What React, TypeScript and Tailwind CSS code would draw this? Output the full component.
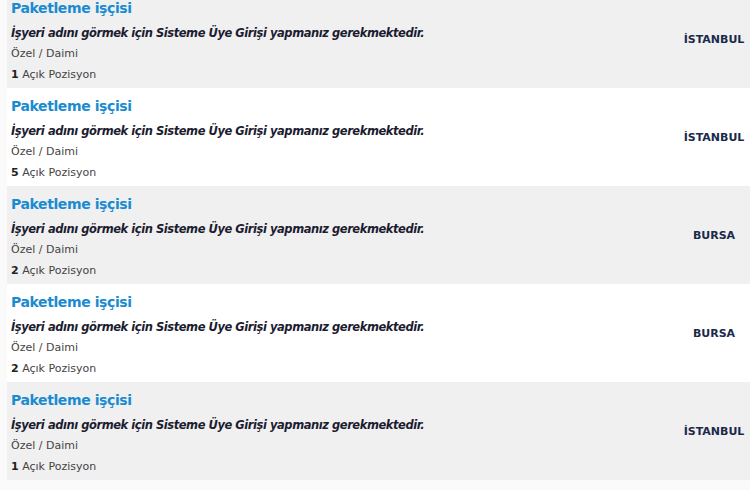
import React from "react";

type Job = { count: number; city: string };

const jobs: Job[] = [
  { count: 1, city: "İSTANBUL" },
  { count: 5, city: "İSTANBUL" },
  { count: 2, city: "BURSA" },
  { count: 2, city: "BURSA" },
  { count: 1, city: "İSTANBUL" },
];

function JobRow({ job, shaded }: { job: Job; shaded: boolean }) {
  return (
    <div className={`flex h-[98px] items-center ${shaded ? "bg-[#f0f0f0]" : "bg-white"}`}>
      <div className="flex-1 self-stretch pl-[4px] pt-[7px]">
        <div className="text-[14px] font-bold leading-[22px] tracking-[-0.4px] text-[#1b8bd0]">
          Paketleme işçisi
        </div>
        <div className="mt-[4px] text-[11.5px] font-bold italic leading-[20px] tracking-[-0.45px] text-[#1c1c30]">
          İşyeri adını görmek için Sisteme Üye Girişi yapmanız gerekmektedir.
        </div>
        <div className="text-[11px] leading-[21px] text-[#444]">Özel / Daimi</div>
        <div className="text-[11px] leading-[21px] text-[#444]">
          <span className="font-bold text-[#222]">{job.count}</span> Açık Pozisyon
        </div>
      </div>
      <div className="mr-[1px] w-[70px] pt-[2px] text-center text-[11px] font-bold text-[#1b2a4a]">
        {job.city}
      </div>
    </div>
  );
}

export default function App() {
  return (
    <div
      className="h-[490px] w-[750px] overflow-hidden bg-[#fafafa] pl-[7px]"
      style={{ fontFamily: '"DejaVu Sans", Verdana, sans-serif' }}
    >
      <div className="-mt-[10px]">
        {jobs.map((job, i) => (
          <JobRow key={i} job={job} shaded={i % 2 === 0} />
        ))}
      </div>
    </div>
  );
}
